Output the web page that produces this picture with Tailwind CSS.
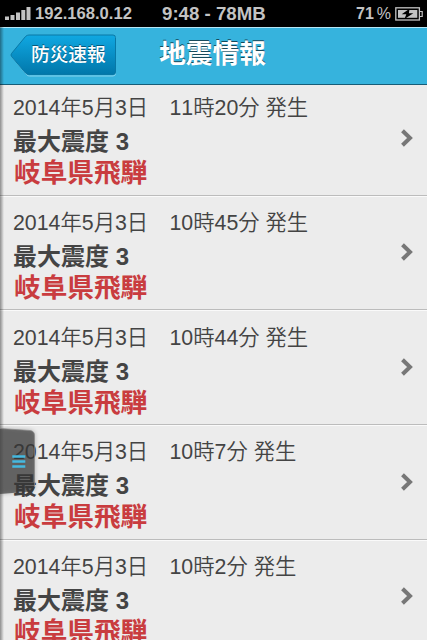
<!DOCTYPE html>
<html lang="ja">
<head>
  <meta charset="UTF-8" />
  <meta name="viewport" content="width=device-width, initial-scale=1" />
  <title>地震情報</title>
  <script src="https://cdn.jsdelivr.net/npm/@tailwindcss/browser@4"></script>
</head>
<body class="relative flex flex-col h-screen overflow-hidden bg-[#ececec] font-['Liberation_Sans','Noto_Sans_CJK_JP',sans-serif]">
  <!-- Status bar -->
  <div class="grid grid-cols-[162px_1fr_71px] items-center h-[27px] shrink-0 bg-black text-[#c3c3c3] font-bold whitespace-nowrap">
    <div class="flex items-center">
      <svg class="ml-[5px] mr-1 w-[26px] h-[14px]" viewBox="0 0 26 14" fill="#c3c3c3">
        <path d="M0 9.5h4V13H0zM5.5 8h4v5h-4zM11 5.5h4V13h-4zM16.3 3h4v10h-4zM21.5 0h4v13h-4z" />
      </svg>
      <span class="text-[16.6px] leading-[27px]">192.168.0.12</span>
    </div>
    <span class="text-[18.67px] leading-[27px]">9:48 - 78MB</span>
    <div class="flex items-center">
      <span class="text-base leading-[27px]">71</span>
      <span class="ml-[3px] w-[14px] text-base leading-[27px] font-normal">%</span>
      <svg class="ml-[4px] w-[29px] h-[14px]" viewBox="0 0 29 14">
        <rect x=".8" y=".8" width="23.6" height="12.2" fill="none" stroke="#c3c3c3" stroke-width="1.3" />
        <rect x="3" y="3" width="19.3" height="7.8" fill="#c3c3c3" />
        <path d="M24.5 4.5h2.7v5h-2.7" fill="none" stroke="#c3c3c3" stroke-width="1.2" />
        <path d="M14.5 1.8 6.7 7.3h4.6L9.5 12l8.8-5.7h-4.4z" fill="#000" />
      </svg>
    </div>
  </div>

  <!-- Header -->
  <header class="relative z-10 grid grid-cols-[149px_127px_1fr] h-[58px] shrink-0 bg-[#36b3dd] border-t border-t-[#b6e6f5] border-b border-b-[#175d78] text-white font-bold">
    <a class="relative block ml-2.5 mt-[6px] w-[107px] h-[43px]">
      <svg class="absolute inset-0" width="107" height="43" viewBox="0 0 107 43">
        <defs>
          <linearGradient id="btn" x1="0" y1="0" x2="0" y2="1">
            <stop offset="0" stop-color="#10a8e2" />
            <stop offset="1" stop-color="#0177aa" />
          </linearGradient>
        </defs>
        <path d="M17 2.2Q18 1.5 19.5 1.5H103Q105.5 1.5 105.5 4V39.5Q105.5 42 103 42H19.5Q18 42 17 41L1.5 22.5" fill="none" stroke="#83d1ec" />
        <path d="M15.5 2.5Q17 1 19 1H103Q105.5 1 105.5 3.5V38Q105.5 40.5 103 40.5H19Q17 40.5 15.5 39L1.5 22.5Q.5 21 1.5 19.5Z" fill="url(#btn)" stroke="#0878a6" />
      </svg>
      <span class="relative block pl-[21px] text-[18.67px] leading-[41px] font-medium whitespace-nowrap text-shadow-[0_-1px_0_#07587b]">防災速報</span>
    </a>
    <h1 class="text-center text-[26.67px] leading-[53px] whitespace-nowrap text-shadow-[0_-1px_0_#17495b]">地震情報</h1>
  </header>

  <!-- Earthquake list -->
  <ul id="quake-list" class="-mt-[4px] text-[#444]"></ul>

  <div class="absolute z-10 left-0 top-[27px] bottom-0 w-1 bg-linear-to-r from-black/40 to-transparent"></div>

  <!-- Menu tab -->
  <div class="absolute z-20 left-0 top-[427px] w-[39px] h-[72px]">
    <svg class="drop-shadow-[0_0_2px_#00000055]" width="39" height="72" viewBox="0 0 39 72">
      <path d="M0 1.5 30 3.5Q34.5 4 34.5 8.5V60Q34.5 64 30.5 64.5L0 67Z" fill="#3a3a3a" fill-opacity=".68" />
      <path d="M0 1.5 30 3.5Q34.5 4 34.5 8.5V60" fill="none" stroke="#888" stroke-opacity=".7" />
      <path d="M12.3 29.5h13M12.3 34.5h13M12.3 39.5h13" stroke="#45b9e0" stroke-width="2.6" />
    </svg>
  </div>

  <template id="quake-row">
    <li class="flex items-center h-[114.67px] pl-[13px] pr-3.5 border-b border-b-[#bcbcbc] shadow-[0_1px_0_#fafafa]">
      <div class="flex-1 pt-[3px] whitespace-nowrap [font-kerning:none]">
        <p class="quake-time text-[21.33px] leading-[32px] font-[350]"></p>
        <p class="text-2xl leading-[36px] font-bold">最大震度 3</p>
        <p class="pl-px text-[26.67px] leading-[26px] font-bold text-[#c93c3f]">岐阜県飛騨</p>
      </div>
      <svg class="w-3 h-[18px]" viewBox="0 0 12 18" fill="none" stroke="#777" stroke-width="4">
        <path d="M1.5 1.7 9 9l-7.5 7.3" />
      </svg>
    </li>
  </template>

  <script>
    const times = ["11時20分", "10時45分", "10時44分", "10時7分", "10時2分"];
    const list = document.getElementById("quake-list");
    const row = document.getElementById("quake-row");

    times.forEach((time) => {
      const item = row.content.cloneNode(true);
      item.querySelector(".quake-time").textContent = "2014年5月3日\u3000" + time + " 発生";
      list.appendChild(item);
    });
  </script>
</body>
</html>
